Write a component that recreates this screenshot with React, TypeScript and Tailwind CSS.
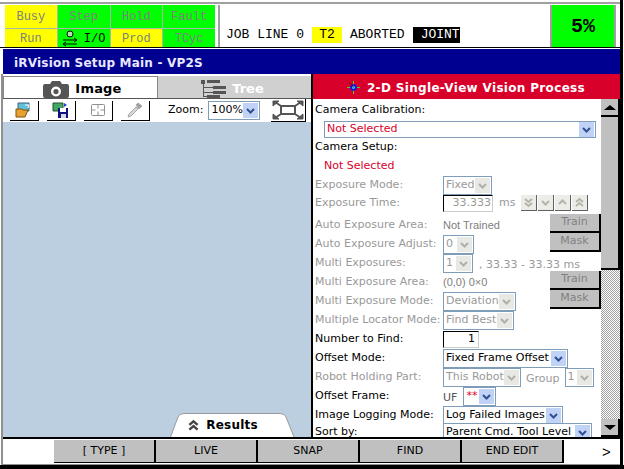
import React from 'react';

const Chevron = ({ double, up, color = '#3b5a9a', size = 11 }: { double?: boolean; up?: boolean; color?: string; size?: number }) => (
  <svg width={size} height={size} viewBox="0 0 11 11" fill="none" stroke={color} strokeWidth="2">
    <g transform={up ? 'rotate(180 5.5 5.5)' : undefined}>
      {double && <path d="M2 2l3.5 3 3.5-3" />}
      <path d={double ? 'M2 6l3.5 3 3.5-3' : 'M2 4l3.5 3.5L9 4'} />
    </g>
  </svg>
);

const Status = ({ label, on }: { label: string; on?: boolean }) => (
  <div className={`flex items-center justify-center text-[#808080] ${on ? 'bg-[#ffff00]' : 'bg-[#00ff00]'}`}>{label}</div>
);

const Select = ({ value, width, off, red, className = '' }: { value: string; width: string; off?: boolean; red?: boolean; className?: string }) => (
  <div className={`flex h-[19px] items-center justify-between border border-[#7f9db9] bg-white pl-[2px] pr-px ${width} ${off ? 'text-[#999999]' : red ? 'text-[#d8002b]' : 'text-black'} ${className}`}>
    <span className="whitespace-nowrap">{value}</span>
    <span className={`flex h-[15px] w-[15px] shrink-0 items-center justify-center ${off ? 'bg-[#e8e8e4]' : 'bg-[#c1d2f7]'}`}>
      <Chevron color={off ? '#b0b0a8' : '#2f4f8f'} />
    </span>
  </div>
);

const GrayBtn = ({ label }: { label: string }) => (
  <div className="ml-auto -mt-[5px] flex h-[19px] w-[51px] items-center justify-center border-r-2 border-b-2 border-black bg-[#c0c0c0] text-[#808080]">{label}</div>
);

const Row = ({ label, off, height = 'h-[19px]', children }: { label: string; off?: boolean; height?: string; children?: React.ReactNode }) => (
  <div className={`flex shrink-0 items-center ${height}`}>
    <span className={`w-[128px] shrink-0 whitespace-nowrap ${off ? 'text-[#999999]' : 'text-black'}`}>{label}</span>
    {children}
  </div>
);

const ToolBtn = ({ children }: { children: React.ReactNode }) => (
  <div className="flex h-[20px] w-[29px] items-center justify-center border-r border-b border-black bg-white">{children}</div>
);

const StepBtn = ({ double, up }: { double?: boolean; up?: boolean }) => (
  <div className="flex h-[16px] w-[16px] items-center justify-center border-r border-b border-[#606060] bg-[#ecece8]">
    <Chevron double={double} up={up} color="#b4b4a8" />
  </div>
);

const FKey = ({ label }: { label: string }) => (
  <div className="flex h-[23px] w-[102px] items-center justify-center border-r-2 border-b border-black bg-[#c0c0c0] pt-px text-black">{label}</div>
);

export default function App() {
  return (
    <div className="flex h-[469px] w-[624px] flex-col overflow-hidden bg-white font-['DejaVu_Sans',sans-serif] text-[11px]">
      <div className="mr-px flex min-h-0 w-[623px] flex-1 flex-col border-r-[3px] border-black">
        {/* status bar */}
        <div className="h-[2px] shrink-0 bg-white" />
        <div className="h-[2px] shrink-0 bg-[#a0a0a0]" />
        <div className="flex h-[43px] shrink-0 pl-[5px] pr-[4px] pt-px font-['Liberation_Mono',monospace] text-[12px]">
          <div className="grid h-[43px] w-[210px] shrink-0 grid-cols-4 grid-rows-[23px_19px] gap-px bg-[#a8b8a8]">
            <Status label="Busy" on />
            <Status label="Step" />
            <Status label="Hold" />
            <Status label="Fault" />
            <Status label="Run" on />
            <div className="flex items-center justify-center gap-[6px] bg-[#00ff00] text-black">
              <svg width="16" height="18" viewBox="0 0 16 18" fill="none" stroke="#000" strokeWidth="1">
                <circle cx="8" cy="4" r="3" fill="#b0e0b0" />
                <path d="M1 10h14M12 8l3 2-3 2M15 14H1M4 12l-3 2 3 2" />
              </svg>
              <span>I/O</span>
            </div>
            <Status label="Prod" on />
            <Status label="TCyc" />
          </div>
          <div className="ml-[3px] h-full w-[2px] shrink-0 bg-[#a0a0a0]" />
          <div className="flex min-w-0 flex-1 items-center gap-[8px] bg-white pl-[6px] pt-[17px] text-[13px] text-black">
            <span className="whitespace-nowrap">JOB LINE 0</span>
            <span className="flex h-[16px] w-[30px] items-center justify-center bg-[#ffff00]">T2</span>
            <span className="whitespace-nowrap">ABORTED</span>
            <span className="flex h-[16px] w-[47px] items-center overflow-hidden whitespace-nowrap bg-black pl-[8px] text-white">JOINT</span>
          </div>
          <div className="flex h-[43px] w-[66px] shrink-0 items-center justify-center border-x-2 border-[#a0a0a0] bg-[#00ff00] text-[20px] font-bold">5%</div>
        </div>

        <div className="h-px shrink-0 bg-black" />
        {/* title */}
        <div className="ml-[3px] mt-px flex h-[25px] shrink-0 items-center bg-[#000090] pl-[11px] pt-[3px] text-[12px] font-bold tracking-[0.2px] text-[#e8e8ff]">iRVision Setup Main - VP2S</div>

        <div className="ml-px flex min-h-0 flex-1 flex-col border-l-2 border-[#909090]">
          <div className="flex min-h-0 flex-1">
            {/* left pane */}
            <div className="flex w-[310px] shrink-0 flex-col border-r-2 border-black">
              <div className="mt-[2px] flex h-[23px] shrink-0 border-b border-[#555555]">
                <div className="flex w-[155px] items-center justify-center gap-[6px] border border-b-0 border-[#888888] bg-white pl-1 pt-[3px] text-[13px] font-bold tracking-[0.2px] text-black">
                  <svg width="26" height="20" viewBox="0 0 26 20" fill="#555555">
                    <path fillRule="evenodd" d="M2 5h5l2-3h8l2 3h5a2 2 0 0 1 2 2v10a2 2 0 0 1-2 2H2a2 2 0 0 1-2-2V7a2 2 0 0 1 2-2zm11 2.500a5 5 0 1 0 0 10 5 5 0 0 0 0-10zm0 2.500a2.600 2.600 0 1 1 0 5.200 2.600 2.600 0 0 1 0-5.200z" />
                  </svg>
                  <span>Image</span>
                </div>
                <div className="flex flex-1 items-center justify-center bg-[#d0d0d0] pr-[6px] pt-[3px] text-[13px] font-bold text-white">
                  <svg width="34" height="20" viewBox="0 0 34 20" fill="#555555">
                    <path d="M8 1h13v3H8zM14 7h13v3H14zM14 12h13v3H14zM8 16h13v3H8z" />
                    <path d="M2 1h4v4H2zM4 5h1v12H4zM4 8h10v1H4zM4 13h10v1H4zM4 17h4v1H4z" />
                  </svg>
                  <span className="-ml-px">Tree</span>
                </div>
              </div>
              <div className="flex h-[23px] shrink-0 items-center bg-white text-[11px] text-black">
                <div className="ml-[7px] flex gap-[8px]">
                  <ToolBtn>
                    <svg width="18" height="16" viewBox="0 0 18 16">
                      <path d="M3 1h11v8H3z" fill="#60c0d8" stroke="#406080" strokeWidth="1" />
                      <path d="M1 7h6l1 1h5l-3 7H1z" fill="#e8a030" stroke="#805010" strokeWidth="1" />
                      <path d="M10 3l4 0-1 3" fill="none" stroke="#fff" />
                    </svg>
                  </ToolBtn>
                  <ToolBtn>
                    <svg width="18" height="17" viewBox="0 0 18 17">
                      <path d="M1 1h10v8H1z" fill="#40a860" stroke="#205030" strokeWidth="1" />
                      <path d="M6 6h10v10H6z" fill="#101080" />
                      <path d="M8 6h6v4H8z" fill="#fff" />
                      <path d="M9 12h5v4H9z" fill="#d8d8e8" />
                      <path d="M12 1l3 2-3 2z" fill="#2040e0" />
                    </svg>
                  </ToolBtn>
                  <ToolBtn>
                    <svg width="16" height="14" viewBox="0 0 16 14" fill="none" stroke="#909090" strokeWidth="1">
                      <rect x="1.500" y="1.500" width="13" height="11" rx="1" />
                      <path d="M8 1.500v4M8 8.500v4M1.500 7h4M10.500 7h4" />
                    </svg>
                  </ToolBtn>
                  <ToolBtn>
                    <svg width="18" height="16" viewBox="0 0 18 16" stroke="#a8a8a8" fill="#d8d8d8">
                      <path d="M2 15l1-3 7-7 2 2-7 7z" />
                      <path d="M10 3l2-2 4 3-2 2-1 1z" fill="#a0a0a0" />
                    </svg>
                  </ToolBtn>
                </div>
                <span className="ml-[18px]">Zoom:</span>
                <div className="ml-[5px] flex h-[19px] w-[52px] items-center justify-between border border-[#7f9db9] pl-[2px] pr-px">
                  <span>100%</span>
                  <span className="flex h-[15px] w-[15px] items-center justify-center bg-[#c1d2f7]">
                    <Chevron color="#2f4f8f" />
                  </span>
                </div>
                <div className="ml-[11px] flex h-[23px] w-[35px] items-center justify-center border-r border-b border-black bg-white">
                  <svg width="32" height="20" viewBox="0 0 32 20" fill="#555555" stroke="#555555">
                    <path d="M9 6h14v8H9z" fill="none" strokeWidth="2" />
                    <path d="M9 6L3 2M23 6l6-4M9 14l-6 4M23 14l6 4" strokeWidth="2" />
                    <path d="M1 1h6L1 6zM31 1h-6l6 5zM1 19h6l-6-5zM31 19h-6l6-5z" strokeWidth="1" />
                  </svg>
                </div>
              </div>
              <div className="flex min-h-0 flex-1 items-end justify-end bg-[#bccfe0] pr-[16px]">
                <div className="relative flex h-[24px] w-[125px] items-center justify-center gap-[6px] pr-[20px] text-[12px] font-bold tracking-[0.2px] text-black">
                  <svg className="absolute inset-0" width="125" height="24" viewBox="0 0 125 24" fill="#ffffff" stroke="#999999">
                    <path d="M0.500 24L8 4Q9.500 0.500 14 0.500H110Q114.500 0.500 116 4L124 24" />
                  </svg>
                  <span className="relative"><Chevron double up color="#444444" size={13} /></span>
                  <span className="relative">Results</span>
                </div>
              </div>
            </div>

            {/* right pane */}
            <div className="flex min-w-0 flex-1 flex-col">
              <div className="flex h-[25px] shrink-0 items-center justify-center gap-[6px] bg-[#d8002b] pr-[2px] pt-[2px] text-[12px] font-bold tracking-[0.33px] text-white">
                <svg width="15" height="15" viewBox="0 0 16 16" fill="none">
                  <path d="M8 1v14M1 8h14" stroke="#40e040" strokeWidth="1" />
                  <circle cx="8" cy="8" r="3.500" fill="#1010e0" />
                  <circle cx="8" cy="8" r="1.500" fill="#40e0e0" />
                  <path d="M3 2l5 6" stroke="#800020" strokeWidth="1" />
                </svg>
                <span>2-D Single-View Vision Process</span>
              </div>
              <div className="flex min-h-0 flex-1">
                <div className="min-w-0 flex-1 overflow-hidden bg-white pl-[2px] pt-[2px] text-[11px]">
                  <Row label="Camera Calibration:" />
                  <div className="ml-[9px] mt-px flex h-[17px] w-[272px] items-center justify-between border border-[#7f9db9] pl-[2px] pr-px text-[#d8002b]">
                    <span>Not Selected</span>
                    <span className="flex h-[15px] w-[15px] items-center justify-center bg-[#c1d2f7]"><Chevron color="#2f4f8f" /></span>
                  </div>
                  <Row label="Camera Setup:" />
                  <div className="flex h-[19px] items-center pl-[9px] text-[#d8002b]">Not Selected</div>
                  <Row label="Exposure Mode:" off><Select value="Fixed" width="w-[49px]" off /></Row>
                  <Row label="Exposure Time:" off height="h-[16px]">
                    <div className="flex h-[17px] w-[50px] items-center justify-end border-t border-l border-t-black border-l-black border-r border-b border-r-[#cccccc] border-b-[#cccccc] pr-px text-[#999999]">33.333</div>
                    <span className="ml-[6px] mr-[6px] text-[#999999]">ms</span>
                    <div className="flex gap-px">
                      <StepBtn double />
                      <StepBtn />
                      <StepBtn up />
                      <StepBtn double up />
                    </div>
                  </Row>
                  <div className="h-[5px]" />
                  <Row label="Auto Exposure Area:" off>
                    <span className="font-['Liberation_Sans',sans-serif] text-[#808080]">Not Trained</span>
                    <GrayBtn label="Train" />
                  </Row>
                  <Row label="Auto Exposure Adjust:" off>
                    <Select value="0" width="w-[31px]" off />
                    <GrayBtn label="Mask" />
                  </Row>
                  <Row label="Multi Exposures:" off>
                    <Select value="1" width="w-[30px]" off />
                    <span className="ml-[6px] mt-[4px] text-[#999999]">, 33.33 - 33.33 ms</span>
                  </Row>
                  <Row label="Multi Exposure Area:" off>
                    <span className="font-['Liberation_Sans',sans-serif] text-[#808080]">(0,0) 0×0</span>
                    <GrayBtn label="Train" />
                  </Row>
                  <Row label="Multi Exposure Mode:" off>
                    <Select value="Deviation" width="w-[73px]" off />
                    <GrayBtn label="Mask" />
                  </Row>
                  <Row label="Multiple Locator Mode:" off><Select value="Find Best" width="w-[71px]" off /></Row>
                  <Row label="Number to Find:">
                    <div className="flex h-[17px] w-[36px] items-center justify-end border-t border-l border-t-black border-l-black border-r border-b border-r-[#cccccc] border-b-[#cccccc] pr-[3px]">1</div>
                  </Row>
                  <Row label="Offset Mode:" height="h-[19px]"><Select value="Fixed Frame Offset" width="w-[125px]" /></Row>
                  <Row label="Robot Holding Part:" off>
                    <Select value="This Robot" width="w-[78px]" off />
                    <span className="ml-[5px] mt-[3px] text-[#999999]">Group</span>
                    <Select value="1" width="w-[29px]" off className="ml-[5px]" />
                  </Row>
                  <Row label="Offset Frame:">
                    <span className="mt-[3px] text-[#555555]">UF</span>
                    <Select value="**" width="w-[33px]" red className="ml-[6px]" />
                  </Row>
                  <Row label="Image Logging Mode:" height="h-[18px]"><Select value="Log Failed Images" width="w-[120px]" /></Row>
                  <Row label="Sort by:" height="h-[17px]"><Select value="Parent Cmd. Tool Level" width="w-[149px]" /></Row>
                </div>
                {/* scrollbar */}
                <div className="flex w-[19px] shrink-0 flex-col">
                  <div className="flex h-[18px] shrink-0 items-center justify-center border-r-2 border-b-2 border-black bg-[#c0c0c0]">
                    <div className="h-0 w-0 border-x-[6px] border-b-[5px] border-x-transparent border-b-black" />
                  </div>
                  <div className="h-[153px] shrink-0 border-r-2 border-b-2 border-black bg-[#c0c0c0]" />
                  <div className="min-h-0 flex-1 bg-[repeating-conic-gradient(#a0a0a0_0_25%,#ffffff_0_50%)] bg-[length:2px_2px]" />
                  <div className="flex h-[18px] shrink-0 items-center justify-center border-r-2 border-b-2 border-black bg-[#c0c0c0]">
                    <div className="h-0 w-0 border-x-[6px] border-t-[5px] border-x-transparent border-t-black" />
                  </div>
                </div>
              </div>
            </div>
          </div>

          {/* function keys */}
          <div className="flex h-[28px] shrink-0 border-t-2 border-b border-t-black border-b-[#909090] bg-white pl-[51px] pt-px text-[11px]">
            <FKey label="[ TYPE ]" />
            <FKey label="LIVE" />
            <FKey label="SNAP" />
            <FKey label="FIND" />
            <FKey label="END EDIT" />
            <span className="ml-[38px] flex h-[24px] items-center font-['Liberation_Sans',sans-serif] text-[15px] text-black">&gt;</span>
          </div>
        </div>
      </div>
      <div className="h-[4px] shrink-0 bg-black" />
    </div>
  );
}
